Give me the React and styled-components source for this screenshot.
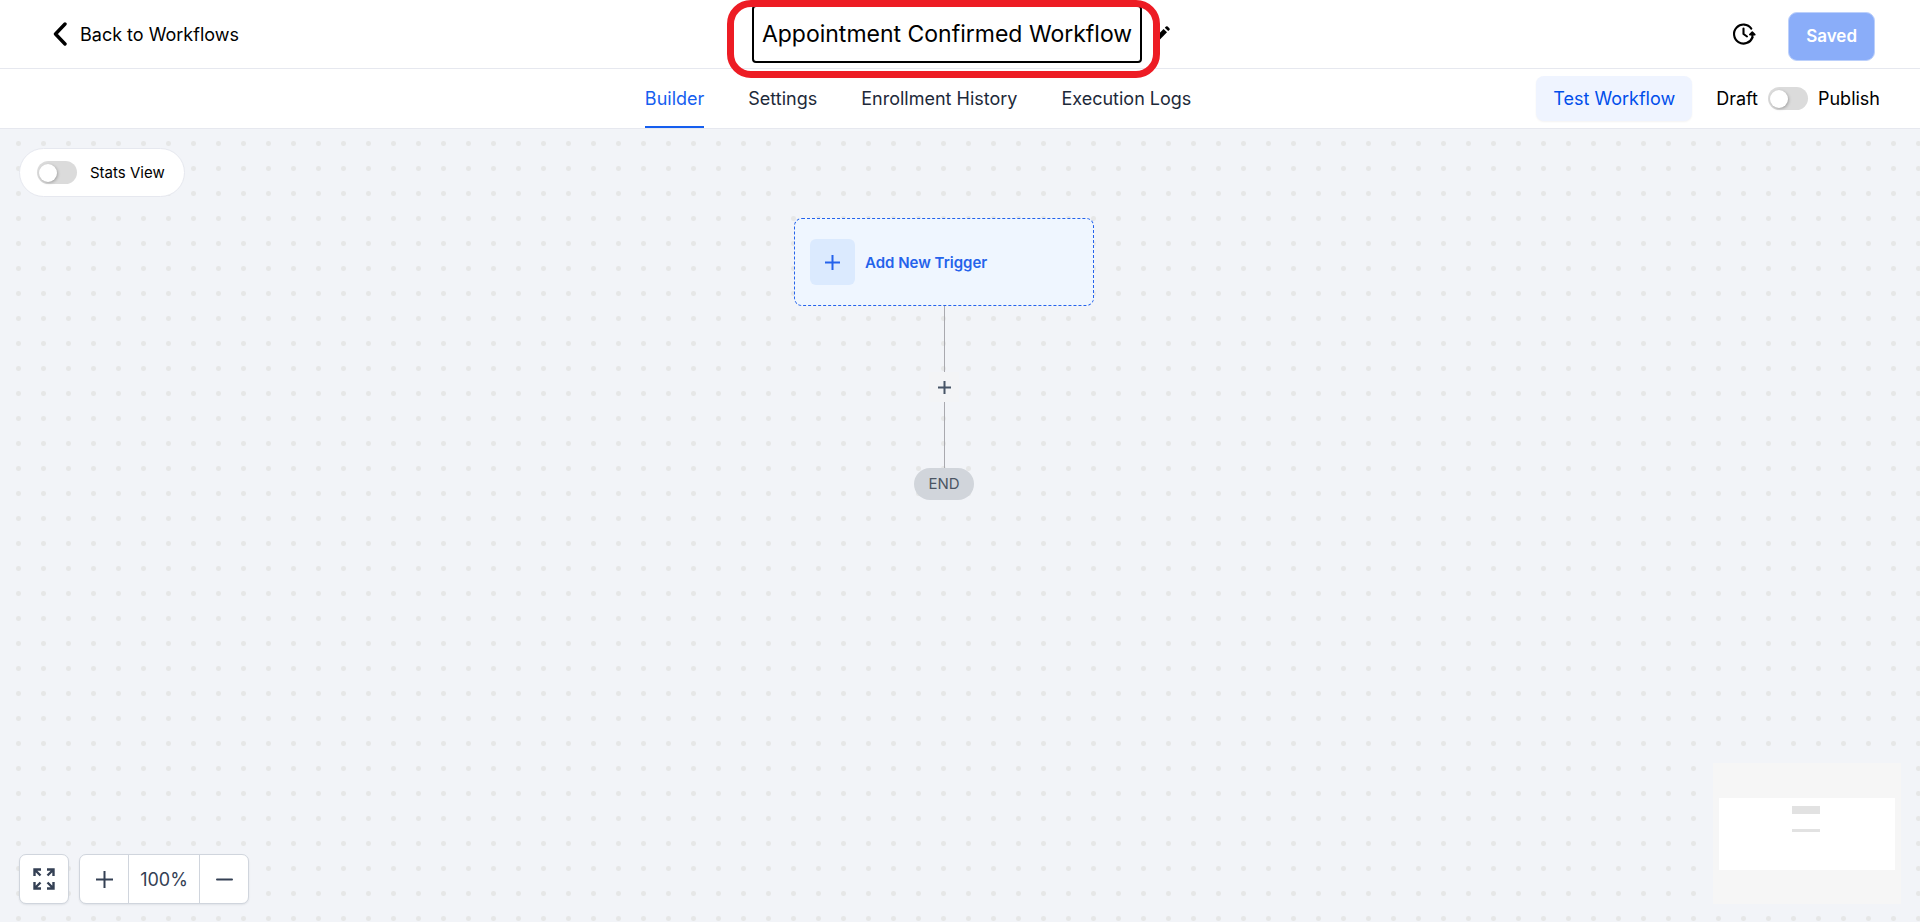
import React, { useState } from 'react';
import styled, { createGlobalStyle } from 'styled-components';

const GlobalStyle = createGlobalStyle`
  * {
    box-sizing: border-box;
  }
  body {
    margin: 0;
    font-family: Inter, "Liberation Sans", sans-serif;
    font-size: 18px;
    color: #000;
    background-color: #fff;
  }
  button, input {
    font-family: inherit;
  }
`;

const Page = styled.div`
  display: flex;
  flex-direction: column;
  min-height: 100vh;
`;

const Header = styled.header`
  display: grid;
  grid-template-columns: 1fr auto 1fr;
  align-items: center;
  height: 69px;
  padding: 0 45px 0 52px;
  border-bottom: 1px solid #e6e8ef;
`;

const BackLink = styled.a`
  display: flex;
  align-items: center;
  gap: 12px;
  justify-self: start;
  color: #000;
  text-decoration: none;
`;

const TitleGroup = styled.div`
  position: relative;
  display: flex;
  align-items: center;
  gap: 12px;
  margin-right: 5px;
`;

const TitleInput = styled.input`
  field-sizing: content;
  height: 58px;
  padding: 0 8px;
  border: 2px solid #000;
  border-radius: 4px;
  background: #fff;
  color: #000;
  font-size: 23px;
  outline: none;
`;

const Highlight = styled.div`
  position: absolute;
  top: -5px;
  left: -25px;
  right: 10px;
  bottom: -15px;
  border: 7px solid #ed1c24;
  border-radius: 24px;
  pointer-events: none;
`;

const IconButton = styled.button`
  display: flex;
  padding: 0;
  border: none;
  background: none;
  color: #000;
  cursor: pointer;
`;

const HeaderActions = styled.div`
  display: flex;
  align-items: center;
  justify-content: flex-end;
  gap: 32px;
`;

const SaveButton = styled.button`
  height: 49px;
  margin-top: 4px;
  padding: 0 17px;
  border: 1px solid #bcd0fb;
  border-radius: 9px;
  background-color: #8aadf9;
  color: #fff;
  font-size: 17px;
  font-weight: 600;
`;

const TabBar = styled.div`
  display: flex;
  align-items: center;
  height: 60px;
  padding: 0 40px 0 300px;
  border-bottom: 1px solid #e6e8ef;
`;

const Tabs = styled.nav`
  display: flex;
  flex: 1;
  justify-content: center;
  align-self: stretch;
  gap: 44px;
`;

const Tab = styled.button`
  padding: 2px 0 0;
  border: none;
  border-bottom: 2px solid ${({ $active }) => ($active ? '#155eef' : 'transparent')};
  background: none;
  color: ${({ $active }) => ($active ? '#155eef' : '#1d2939')};
  font-size: 18px;
  cursor: pointer;
`;

const TestButton = styled.button`
  height: 45px;
  margin-right: 24px;
  padding: 0 17px;
  border: none;
  border-radius: 8px;
  background-color: #eff4ff;
  box-shadow: 0 1px 2px rgba(16, 24, 40, 0.05);
  color: #004eeb;
  font-size: 18px;
  cursor: pointer;
`;

const PublishLabel = styled.label`
  display: flex;
  align-items: center;
  gap: 10px;
`;

const Switch = styled.input`
  appearance: none;
  display: flex;
  align-items: center;
  width: 40px;
  height: 23px;
  margin: 0;
  padding: 0 2px;
  border-radius: 12px;
  background-color: ${({ checked }) => (checked ? '#155eef' : '#dbdbdb')};
  cursor: pointer;

  &::before {
    content: '';
    width: 18px;
    height: 18px;
    margin-left: ${({ checked }) => (checked ? '18px' : '0')};
    border-radius: 50%;
    background-color: #fff;
    box-shadow: 1px 1px 3px rgba(0, 0, 0, 0.25);
  }
`;

const Canvas = styled.main`
  position: relative;
  display: flex;
  flex: 1;
  flex-direction: column;
  justify-content: space-between;
  padding: 19px 19px 18px;
  background-color: #f2f4f8;
  background-image: radial-gradient(circle, #e6e7e7 2px, transparent 3px);
  background-size: 25px 25px;
  background-position: 6px 2px;
`;

const StatsLabel = styled.label`
  display: flex;
  align-items: center;
  align-self: flex-start;
  gap: 13px;
  height: 49px;
  padding: 0 19px 0 17px;
  border: 1px solid #e6e8ef;
  border-radius: 25px;
  background-color: #fff;
  font-size: 15px;
`;

const Flow = styled.div`
  position: absolute;
  top: 89px;
  left: 0;
  right: 32px;
  display: flex;
  flex-direction: column;
  align-items: center;
`;

const TriggerCard = styled.button`
  display: flex;
  align-items: center;
  gap: 10px;
  width: 300px;
  height: 88px;
  padding: 0 15px;
  border: 1px dashed #2563eb;
  border-radius: 8px;
  background-color: #eff6ff;
  color: #2563eb;
  font-size: 15px;
  font-weight: 600;
  cursor: pointer;
`;

const TriggerIcon = styled.span`
  display: flex;
  align-items: center;
  justify-content: center;
  width: 45px;
  height: 46px;
  border-radius: 6px;
  background-color: #dbeafe;
`;

const Line = styled.div`
  width: 1px;
  height: 66px;
  background-color: #a9a9af;
`;

const AddStep = styled.button`
  display: flex;
  align-items: center;
  justify-content: center;
  width: 30px;
  height: 30px;
  padding: 0;
  border: none;
  background-color: #f3f4f6;
  color: #475467;
  cursor: pointer;
`;

const EndNode = styled.div`
  width: 60px;
  border-radius: 16px;
  background-color: #d1d5db;
  color: #4b5563;
  font-size: 15px;
  line-height: 32px;
  text-align: center;
`;

const CanvasFooter = styled.div`
  display: flex;
  align-items: flex-end;
  justify-content: space-between;
`;

const Controls = styled.div`
  display: flex;
  gap: 10px;
  color: #344054;
`;

const ControlGroup = styled.div`
  display: flex;
  height: 50px;
  border: 1px solid #d0d5dd;
  border-radius: 7px;
  background-color: #fff;
  box-shadow: 0 1px 2px rgba(16, 24, 40, 0.08);
`;

const ControlButton = styled.button`
  display: flex;
  align-items: center;
  justify-content: center;
  width: 48px;
  padding: 0;
  border: none;
  background: none;
  color: #344054;
  cursor: pointer;
`;

const ZoomValue = styled.span`
  display: flex;
  align-items: center;
  justify-content: center;
  width: 72px;
  border: 1px solid #d0d5dd;
  border-width: 0 1px;
`;

const Minimap = styled.svg`
  display: block;
  width: 188px;
  height: 141px;
`;

const PlusIcon = ({ size, stroke = 2 }) => (
  <svg width={size} height={size} viewBox={`0 0 ${size} ${size}`} stroke="currentColor" strokeWidth={stroke}>
    <path d={`M0 ${size / 2}H${size}M${size / 2} 0V${size}`} />
  </svg>
);

const ChevronIcon = () => (
  <svg width="16" height="24" viewBox="0 0 16 24" fill="none" stroke="currentColor" strokeWidth="3.4" strokeLinecap="round" strokeLinejoin="round">
    <path d="M13 2L3.5 12L13 22" />
  </svg>
);

const PencilIcon = () => (
  <svg width="16" height="16" viewBox="0 0 16 16" fill="currentColor">
    <path d="M0 16V12.5L9.6 2.9L13 6.3L3.5 16Z" />
    <path d="M10.8 1.7L12 .5Q12.8 -.2 13.7 .6L15.4 2.3Q16.1 3.2 15.4 4L14.2 5.1Z" />
  </svg>
);

const HistoryIcon = () => (
  <svg width="24" height="24" viewBox="0 0 24 24" fill="none" stroke="currentColor" strokeWidth="2.1" strokeLinecap="round" strokeLinejoin="round">
    <path d="M19.3 6.6A9.5 9.5 0 1 0 20.4 15.5" />
    <path d="M11.5 6.5V12L15 14.5" />
    <path d="M20.4 15.5V12" />
    <path d="M17.8 12.6L20.3 10L22.8 12.6Z" fill="currentColor" strokeWidth="1.6" />
  </svg>
);

const ExpandIcon = () => (
  <svg width="22" height="22" viewBox="0 0 22 22" fill="none" stroke="currentColor" strokeWidth="2.4">
    <path d="M1.5 8V1.5H8M1.5 1.5L7.5 7.5" />
    <path d="M14 1.5H20.5V8M20.5 1.5L14.5 7.5" />
    <path d="M1.5 14V20.5H8M1.5 20.5L7.5 14.5" />
    <path d="M14 20.5H20.5V14M20.5 20.5L14.5 14.5" />
  </svg>
);

const MinusIcon = () => (
  <svg width="17" height="17" viewBox="0 0 17 17" stroke="currentColor" strokeWidth="2" strokeLinecap="round">
    <path d="M1 8.5H16" />
  </svg>
);

const tabs = ['Builder', 'Settings', 'Enrollment History', 'Execution Logs'];

const App = () => {
  const [title, setTitle] = useState('Appointment Confirmed Workflow');
  const [activeTab, setActiveTab] = useState('Builder');
  const [published, setPublished] = useState(false);
  const [statsView, setStatsView] = useState(false);
  const [zoom, setZoom] = useState(100);

  return (
    <Page>
      <GlobalStyle />
      <Header>
        <BackLink href="#workflows">
          <ChevronIcon />
          Back to Workflows
        </BackLink>
        <TitleGroup>
          <TitleInput
            type="text"
            aria-label="Workflow name"
            value={title}
            onChange={(e) => setTitle(e.target.value)}
          />
          <IconButton type="button" aria-label="Edit name">
            <PencilIcon />
          </IconButton>
          <Highlight />
        </TitleGroup>
        <HeaderActions>
          <IconButton type="button" aria-label="Version history">
            <HistoryIcon />
          </IconButton>
          <SaveButton type="button">Saved</SaveButton>
        </HeaderActions>
      </Header>

      <TabBar>
        <Tabs>
          {tabs.map((tab) => (
            <Tab key={tab} type="button" $active={tab === activeTab} onClick={() => setActiveTab(tab)}>
              {tab}
            </Tab>
          ))}
        </Tabs>
        <TestButton type="button">Test Workflow</TestButton>
        <PublishLabel>
          Draft
          <Switch type="checkbox" checked={published} onChange={(e) => setPublished(e.target.checked)} />
          Publish
        </PublishLabel>
      </TabBar>

      <Canvas>
        <StatsLabel>
          <Switch type="checkbox" checked={statsView} onChange={(e) => setStatsView(e.target.checked)} />
          Stats View
        </StatsLabel>

        <Flow>
          <TriggerCard type="button">
            <TriggerIcon>
              <PlusIcon size={15} />
            </TriggerIcon>
            Add New Trigger
          </TriggerCard>
          <Line />
          <AddStep type="button" aria-label="Add step">
            <PlusIcon size={13} />
          </AddStep>
          <Line />
          <EndNode>END</EndNode>
        </Flow>

        <CanvasFooter>
          <Controls>
            <ControlGroup>
              <ControlButton type="button" aria-label="Fit to screen">
                <ExpandIcon />
              </ControlButton>
            </ControlGroup>
            <ControlGroup>
              <ControlButton type="button" aria-label="Zoom in" onClick={() => setZoom(zoom + 10)}>
                <PlusIcon size={17} />
              </ControlButton>
              <ZoomValue>{zoom}%</ZoomValue>
              <ControlButton type="button" aria-label="Zoom out" onClick={() => setZoom(zoom - 10)}>
                <MinusIcon />
              </ControlButton>
            </ControlGroup>
          </Controls>
          <Minimap viewBox="0 0 188 141">
            <rect width="188" height="141" fill="#f6f6f6" />
            <rect x="6" y="35" width="176" height="72" fill="#fff" />
            <rect x="79" y="43" width="28" height="8" fill="#e2e2e2" />
            <rect x="79" y="66" width="28" height="3" fill="#e2e2e2" />
          </Minimap>
        </CanvasFooter>
      </Canvas>
    </Page>
  );
};

export default App;
